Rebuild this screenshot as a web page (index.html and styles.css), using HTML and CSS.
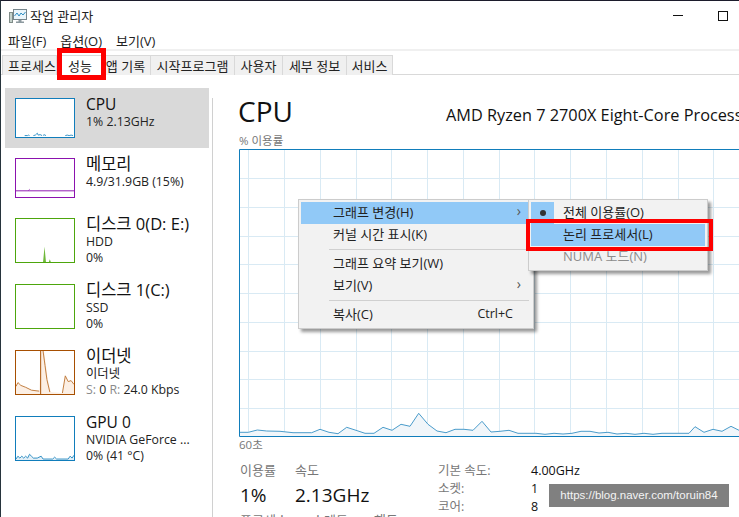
FILE: index.html
```html
<!DOCTYPE html>
<html lang="ko">
<head>
<meta charset="utf-8">
<title>작업 관리자</title>
<link rel="stylesheet" href="styles.css">
</head>
<body>
<div class="window">
  <header class="titlebar">
    <svg class="appicon" width="18" height="16" viewBox="0 0 18 16">
      <rect x="0.5" y="4.5" width="3" height="10" fill="#c5d2cc" stroke="#7f8c88"/>
      <rect x="4.5" y="1.5" width="13" height="10" fill="#eaf5fb" stroke="#76858c"/>
      <polyline points="5.5,8 8,5 10,8 12,5 14,7 16.5,4" fill="none" stroke="#2f8fc4"/>
      <path d="M9.5 12h3v1.5h2.5v1.5h-8v-1.5h2.5z" fill="#8d9aa0"/>
    </svg>
    <span class="apptitle">작업 관리자</span>
    <div class="winbtns">
      <span class="minimize"></span>
      <span class="maximize"></span>
    </div>
  </header>
  <nav class="menubar">
    <span>파일(F)</span><span>옵션(O)</span><span>보기(V)</span>
  </nav>
  <div class="tabs">
    <span class="tab tab-proc">프로세스</span>
    <span class="tab tab-perf">성능</span>
    <span class="tab tab-app">앱 기록</span>
    <span class="tab tab-start">시작프로그램</span>
    <span class="tab tab-user">사용자</span>
    <span class="tab tab-detail">세부 정보</span>
    <span class="tab tab-svc">서비스</span>
  </div>
  <main class="content">
    <aside class="sidebar">
      <div class="row row-short selected">
        <svg class="thumb thumb-short cpu" viewBox="0 0 60 40" preserveAspectRatio="none">
          <polyline class="line-blue" points="9,38.5 12,38.5 13,38 14,38.5"/>
          <polyline class="line-blue" points="18,38.5 20,38 21,37 22,36 23,38 25,37.5 27,38.5"/>
          <polyline class="line-blue" points="28,38.5 29,37.5 31,38.5"/>
          <polyline class="line-blue" points="51,38.5 53,38 55,38.5 57,38 59,38.5"/>
        </svg>
        <div class="info"><div class="name name-latin">CPU</div><div class="sub">1% 2.13GHz</div></div>
      </div>
      <div class="row row-short">
        <svg class="thumb thumb-short mem" viewBox="0 0 60 40" preserveAspectRatio="none">
          <line class="line-purple" x1="0" y1="33.5" x2="60" y2="33.5"/>
          <line class="line-purple" x1="13" y1="33" x2="14" y2="32"/>
        </svg>
        <div class="info"><div class="name">메모리</div><div class="sub">4.9/31.9GB (15%)</div></div>
      </div>
      <div class="row">
        <svg class="thumb disk" viewBox="0 0 60 45" preserveAspectRatio="none">
          <polygon class="fill-green" points="28,45 29.5,29 31,45"/>
          <polygon class="fill-green" points="34,45 35,42 36,45"/>
        </svg>
        <div class="info"><div class="name">디스크 0(D: E:)</div><div class="sub">HDD</div><div class="sub">0%</div></div>
      </div>
      <div class="row">
        <svg class="thumb disk" viewBox="0 0 60 45" preserveAspectRatio="none"></svg>
        <div class="info"><div class="name">디스크 1(C:)</div><div class="sub">SSD</div><div class="sub">0%</div></div>
      </div>
      <div class="row">
        <svg class="thumb eth" viewBox="0 0 60 45" preserveAspectRatio="none">
          <polygon class="fill-orange" points="0,37 2,33 5,36 10,38 16,41 24,42 26,0 29,0 31,15 33,30 36,43 48,44 51,26 54,32 57,31 60,35 60,45 0,45"/>
          <polyline class="line-orange" points="0,37 2,33 5,36 10,38 16,41 24,42"/>
          <polyline class="line-orange" points="28,0 30,15 32,30 35,43"/>
          <polyline class="line-orange" points="48,44 51,26 54,32 57,31 60,35"/>
          <line class="line-dark" x1="25.5" y1="0" x2="25.5" y2="45"/>
        </svg>
        <div class="info"><div class="name">이더넷</div><div class="sub">이더넷</div><div class="sub"><span class="muted">S:</span> 0 <span class="muted">R:</span> 24.0 Kbps</div></div>
      </div>
      <div class="row">
        <svg class="thumb gpu" viewBox="0 0 60 45" preserveAspectRatio="none">
          <polygon class="fill-blue" points="0,44 2,41 4,43 6,41 8,43 10,41 12,43 14,39 16,41 18,43 22,43 26,41 28,44 38,44 40,42 42,44 54,44 56,41 58,43 60,40 60,45 0,45"/>
          <polyline class="line-blue" points="0,44 2,41 4,43 6,41 8,43 10,41 12,43 14,39 16,41 18,43 22,43 26,41 28,44 38,44 40,42 42,44 54,44 56,41 58,43 60,40"/>
        </svg>
        <div class="info"><div class="name name-latin">GPU 0</div><div class="sub">NVIDIA GeForce ...</div><div class="sub">0% (41 °C)</div></div>
      </div>
    </aside>
    <section class="detail">
      <div class="detail-head">
        <h1 class="bigname">CPU</h1>
        <div class="model">AMD Ryzen 7 2700X Eight-Core Processor</div>
      </div>
      <div class="axis">% 이용률</div>
      <svg class="graph" width="500" height="288" viewBox="239 150 500 288">
        <g class="grid">
          <path d="M248.5 150V437M284.5 150V437M320.5 150V437M356.5 150V437M391.5 150V437M427.5 150V437M463.5 150V437M499.5 150V437M534.5 150V437M570.5 150V437M606.5 150V437M642.5 150V437M678.5 150V437M713.5 150V437"/>
          <path d="M239 179.5H739M239 208.5H739M239 237.5H739M239 265.5H739M239 294.5H739M239 323.5H739M239 352.5H739M239 380.5H739M239 409.5H739"/>
        </g>
        <polygon class="graph-fill" points="239.3,433.3 248.3,433.3 257.3,431 266.7,432 280,432.3 293,433.7 311.7,433.7 320,430.3 329,433.3 338,434.7 346.7,428.3 356,431.3 365,434.3 374,434.3 383,428.3 392,431.3 401,425.3 410,427.3 418.7,414.3 428,425.3 437,432 446,433.7 455,430.3 464,430.3 473,431.3 482,422.3 491,433 500,432.3 509,431.3 518,434.3 536,434.3 545,435.3 554,434.3 563,435 572,434.3 581,432.3 590,432.3 599,434 608,433.3 617,435 626,434.3 635,435.3 644,434.3 653,435.3 662,434.3 689,434.3 695,427.7 704,433.3 713,430.3 722,432.3 731,427.3 739,431.3 739,437 239,437"/>
        <polyline class="graph-line" points="239.3,433.3 248.3,433.3 257.3,431 266.7,432 280,432.3 293,433.7 311.7,433.7 320,430.3 329,433.3 338,434.7 346.7,428.3 356,431.3 365,434.3 374,434.3 383,428.3 392,431.3 401,425.3 410,427.3 418.7,414.3 428,425.3 437,432 446,433.7 455,430.3 464,430.3 473,431.3 482,422.3 491,433 500,432.3 509,431.3 518,434.3 536,434.3 545,435.3 554,434.3 563,435 572,434.3 581,432.3 590,432.3 599,434 608,433.3 617,435 626,434.3 635,435.3 644,434.3 653,435.3 662,434.3 689,434.3 695,427.7 704,433.3 713,430.3 722,432.3 731,427.3 739,431.3"/>
        <path class="graph-border" d="M739 150.5H239.5V437.5H739"/>
      </svg>
      <div class="axis axis-time">60초</div>
      <div class="stats">
        <div class="stats-left">
          <div class="stat-row">
            <div class="stat stat-usage"><div class="stat-label">이용률</div><div class="stat-value">1%</div></div>
            <div class="stat"><div class="stat-label">속도</div><div class="stat-value">2.13GHz</div></div>
          </div>
          <div class="stat-row">
            <div class="stat-label stat-proc">프로세스</div>
            <div class="stat-label stat-thread">스레드</div>
            <div class="stat-label">핸들</div>
          </div>
        </div>
        <dl class="specs">
          <dt>기본 속도:</dt><dd>4.00GHz</dd>
          <dt>소켓:</dt><dd>1</dd>
          <dt>코어:</dt><dd>8</dd>
        </dl>
      </div>
    </section>
  </main>

  <div class="menu menu-main">
    <div class="mi hot"><span>그래프 변경(H)</span><span class="arrow">›</span></div>
    <div class="mi"><span>커널 시간 표시(K)</span></div>
    <div class="sep"></div>
    <div class="mi"><span>그래프 요약 보기(W)</span></div>
    <div class="mi"><span>보기(V)</span><span class="arrow">›</span></div>
    <div class="sep"></div>
    <div class="mi"><span>복사(C)</span><span class="shortcut">Ctrl+C</span></div>
  </div>
  <div class="menu menu-sub">
    <div class="mi mi-sub"><span class="radio"><i></i></span><span>전체 이용률(O)</span></div>
    <div class="mi mi-sub hot"><span class="radio"></span><span>논리 프로세서(L)</span></div>
    <div class="mi mi-sub disabled"><span class="radio"></span><span>NUMA 노드(N)</span></div>
  </div>
  <div class="redbox redbox-tab"></div>
  <div class="redbox redbox-menu"></div>
  <div class="watermark">https://blog.naver.com/toruin84</div>
</div>
</body>
</html>
```

FILE: styles.css
```css
* { box-sizing: border-box; }
html, body { margin: 0; padding: 0; height: 100%; overflow: hidden; background: #fff; }
body {
  font-family: "Open Sans", "Noto Sans CJK KR", sans-serif;
  font-size: 13px;
  color: #1a1a1a;
}
.window {
  position: relative;
  width: 739px;
  height: 517px;
  overflow: hidden;
  border-top: 1px solid #1c1c2c;
  border-left: 1px solid #27343c;
  background: #fff;
}
.titlebar { display: flex; align-items: center; height: 29px; padding-left: 8px; }
.appicon { margin-right: 3px; }
.apptitle { font-size: 13px; color: #222; }
.winbtns { margin-left: auto; display: flex; align-items: center; gap: 35px; padding-right: 11px; }
.minimize { width: 10px; height: 1px; background: #111; }
.maximize { width: 10px; height: 10px; border: 1px solid #111; }
.menubar { display: flex; height: 19px; align-items: center; gap: 14px; padding-left: 7px; padding-top: 1px; color: #222; }
.tabs {
  display: flex;
  height: 26px;
  padding: 4px 0 0 2px;
  border-top: 2px solid #f0f0f0;
  border-bottom: 1px solid #d9d9d9;
}
.tab {
  display: flex;
  align-items: center;
  justify-content: center;
  height: 20px;
  background: #f0f0f0;
  border: 1px solid #d9d9d9;
  border-bottom: 0;
  margin-left: -1px;
  color: #222;
  white-space: nowrap;
}
.tab-proc { width: 55px; padding-left: 5px; }
.tab-perf { width: 48px; background: #fff; }
.tab-app { width: 48px; padding-right: 3px; }
.tab-start { width: 85px; }
.tab-user { width: 49px; }
.tab-detail { width: 65px; }
.tab-svc { width: 47px; }
.content { display: flex; height: 442px; }
.sidebar {
  flex: none;
  width: 212px;
  padding: 13px 4px 0 4px;
  position: relative;
  height: 100%;
}
.sidebar::after {
  content: "";
  position: absolute;
  top: 23px;
  bottom: 0;
  right: 0;
  width: 1px;
  background: #d0d0d0;
}
.row { display: flex; align-items: flex-start; height: 66px; padding: 10px 0 0 10px; }
.row-short { height: 60px; }
.selected { background: #d9d9d9; }
.thumb { flex: none; display: block; width: 60px; height: 45px; border: 1px solid; background: #fff; }
.thumb-short { height: 40px; }
.cpu, .gpu { border-color: #117dbb; }
.mem { border-color: #8b12ae; }
.disk { border-color: #4da60c; }
.eth { border-color: #a74f01; }
.fill-blue { fill: #e3eff7; }
.line-blue { fill: none; stroke: #2f8fc4; stroke-width: 1; }
.line-purple { stroke: #8b12ae; stroke-width: 1; }
.fill-green { fill: #6fb83a; }
.fill-orange { fill: #fcefe4; }
.line-orange { fill: none; stroke: #c07a3a; stroke-width: 1; }
.line-dark { stroke: #a74f01; stroke-width: 1; }
.info { margin-left: 11px; margin-top: -4px; }
.name { font-size: 16.5px; line-height: 20px; color: #111; white-space: nowrap; }
.name-latin { font-size: 15.5px; }
.sub { font-size: 12.3px; line-height: 16px; color: #222; white-space: nowrap; }
.muted { color: #8a8a8a; }
.detail { flex: 1; min-width: 0; padding-left: 26px; padding-top: 21px; position: relative; }
.detail-head { display: flex; align-items: flex-end; height: 30px; white-space: nowrap; }
.bigname { margin: 0 0 0 -1px; font-weight: 400; font-size: 28px; line-height: 30px; color: #111; }
.model { position: absolute; left: 233px; top: 29px; font-size: 16.3px; line-height: 22px; color: #111; white-space: nowrap; }
.axis { font-size: 11.5px; line-height: 14px; color: #777; margin-top: 8px; height: 14px; }
.graph { display: block; margin-left: 0; margin-top: 1px; }
.grid path { fill: none; stroke: #d9eaf4; stroke-width: 1; }
.graph-fill { fill: #f1f6fa; }
.graph-line { fill: none; stroke: #4a9ccb; stroke-width: 1; }
.graph-border { fill: none; stroke: #117dbb; stroke-width: 1; }
.axis-time { margin-top: 1px; }
.stats { display: flex; margin-top: 11px; padding-left: 1px; white-space: nowrap; }
.stats-left { width: 198px; }
.stat-row { display: flex; }
.stat-usage { width: 55px; }
.stat-label { font-size: 13px; line-height: 15px; color: #777; }
.stat-value { font-size: 19px; line-height: 34px; color: #111; margin-bottom: 1px; }
.stat-proc { width: 72px; }
.stat-thread { width: 62px; }
.specs { margin: 0; display: grid; grid-template-columns: 93px auto; grid-auto-rows: 18px; font-size: 12.5px; }
.specs dt { color: #777; line-height: 15px; }
.specs dd { margin: 0; color: #111; line-height: 15px; }
.menu {
  position: absolute;
  background: #f2f2f2;
  border: 1px solid #ccc;
  box-shadow: 3px 3px 3px rgba(0, 0, 0, 0.4);
}
.menu-main { left: 297px; top: 198px; width: 236px; height: 130px; padding: 2px; }
.menu-sub { left: 527px; top: 198px; width: 180px; height: 72px; padding: 2px; }
.mi { display: flex; align-items: center; justify-content: space-between; height: 22px; padding: 0 10px 4px 32px; color: #222; white-space: nowrap; }
.hot { background: #91c9f7; }
.arrow { font-size: 14px; color: #555; line-height: 14px; }
.shortcut { padding-right: 8px; font-size: 12.5px; }
.sep { height: 1px; background: #d0d0d0; margin: 3px 2px 3px 28px; }
.mi-sub { justify-content: flex-start; padding: 0 0 4px; }
.radio { display: flex; align-items: center; justify-content: center; width: 23px; height: 22px; margin: 0 9px 0 0; }
.mi-sub:first-child .radio { background: #91c9f7; margin-bottom: -4px; }
.mi-sub:nth-child(n+2) .radio { height: 18px; }
.radio i { display: block; width: 6px; height: 6px; border-radius: 50%; background: #333; }
.disabled { color: #8c8c8c; }
.redbox { position: absolute; }
.redbox-tab { left: 56px; top: 47px; width: 49px; height: 32px; border: 5px solid #fe0000; }
.redbox-menu { left: 525px; top: 218px; width: 187px; height: 32px; border: 4px solid #fe0000; }
.watermark {
  position: absolute;
  left: 548px;
  top: 483px;
  width: 180px;
  height: 23px;
  line-height: 23px;
  text-align: center;
  background: #808080;
  color: #f4f4f4;
  font-family: "Liberation Sans", sans-serif;
  font-size: 11.5px;
}
```
